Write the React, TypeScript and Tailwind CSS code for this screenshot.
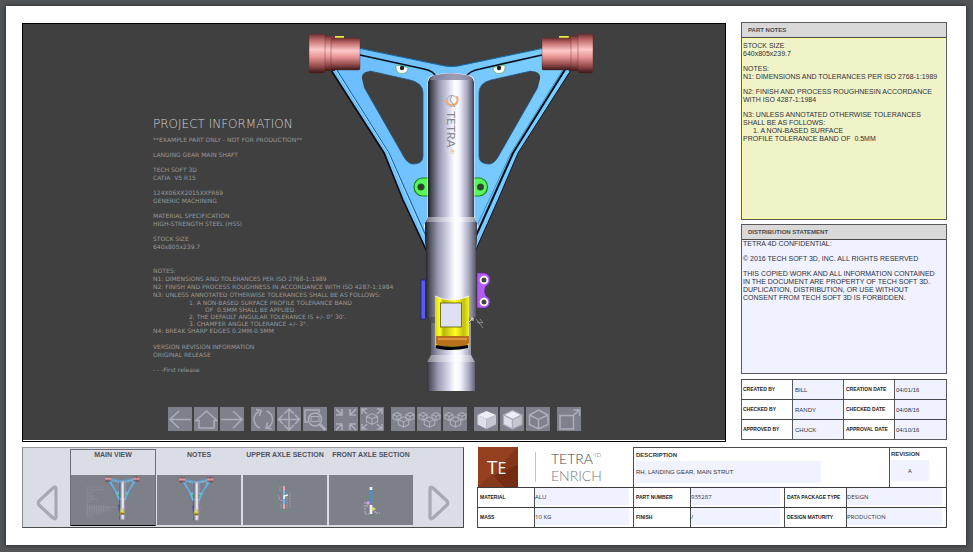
import type { ReactNode } from "react";

const FIELD =
  "min-w-0 bg-[#f0f2ff] text-[6px] text-[#33343c] outline-none leading-[8px]";

function Shaft({ marked }: { marked?: boolean }) {
  return (
    <g>
      <defs>
        <linearGradient id="tube" x1="0" x2="1" y1="0" y2="0">
          <stop offset="0" stopColor="#1c1c22" />
          <stop offset="0.08" stopColor="#4c4c5a" />
          <stop offset="0.25" stopColor="#9a9ab2" />
          <stop offset="0.45" stopColor="#d6d6ea" />
          <stop offset="0.58" stopColor="#ffffff" />
          <stop offset="0.68" stopColor="#f4f4ff" />
          <stop offset="0.85" stopColor="#a6a6be" />
          <stop offset="0.95" stopColor="#6a6a7c" />
          <stop offset="1" stopColor="#3a3a44" />
        </linearGradient>
        <linearGradient id="hub" x1="0" x2="0" y1="0" y2="1">
          <stop offset="0" stopColor="#6e3030" />
          <stop offset="0.15" stopColor="#c06a6a" />
          <stop offset="0.4" stopColor="#ffc9c9" />
          <stop offset="0.6" stopColor="#e69292" />
          <stop offset="0.85" stopColor="#8a4444" />
          <stop offset="1" stopColor="#3a1818" />
        </linearGradient>
        <linearGradient id="arm" x1="0" x2="1" y1="0" y2="0">
          <stop offset="0" stopColor="#6cbcff" />
          <stop offset="1" stopColor="#7ccfff" />
        </linearGradient>
        <linearGradient id="collar" x1="0" x2="1" y1="0" y2="0">
          <stop offset="0" stopColor="#d8d800" />
          <stop offset="0.15" stopColor="#ffff30" />
          <stop offset="0.25" stopColor="#b8b810" />
          <stop offset="0.6" stopColor="#ffff20" />
          <stop offset="0.85" stopColor="#c0c010" />
          <stop offset="1" stopColor="#f4f420" />
        </linearGradient>
      </defs>
      <path
        fillRule="evenodd"
        fill="url(#arm)"
        d="M329 66 L345 55 L359 48 L445 66 Q451 67 458 66 L543 48 L558 55 L573 66 L518 153 Q505 184 474 253 L428 253 L403 200 L385 153 Z
           M362 79 Q361 72 370 71 L410 80 Q423 83 423 93 V156 Q423 164 413 164 Q408 164 404 157 L364 87 Z
           M540 79 Q541 71 531 71 L491 80 Q479 83 479 93 V156 Q479 164 489 164 Q494 164 498 157 L538 87 Z"
      />
      <g fill="none" strokeLinejoin="round">
        <path d="M329 67 L384 153 L403 200 L428 254" stroke="#0a0d12" strokeWidth="1.6" />
        <path d="M573 67 L518 153 L498 200 L474 254" stroke="#0a1c30" strokeWidth="1" />
        <path d="M335 67 L389 153 L426 236" stroke="#0e5b9c" strokeWidth="1" />
        <path d="M333 66 L388 153 L424 236" stroke="#a8dcff" strokeWidth="0.8" />
        <path d="M566 68 L513 153 L475 238" stroke="#04101c" strokeWidth="2" />
        <path d="M564 68 L511 153 L474 232" stroke="#3d8ecb" strokeWidth="1" />
        <path d="M360 55 L424 69 Q434 71 436 77" stroke="#04101c" strokeWidth="1.7" />
        <path d="M542 55 L480 69 Q469 71 466 77" stroke="#04101c" strokeWidth="1.7" />
        <path d="M360 48.500 L445 66 Q451 67 458 66 L542 48.500" stroke="#1769a8" strokeWidth="1" />
        <path d="M364 87 L404 157 Q408 164 413 164 Q423 164 423 156 V93 Q423 83 410 80 L370 71" stroke="#25557f" strokeWidth="0.8" />
        <path d="M538 87 L498 157 Q494 164 489 164 Q479 164 479 156 V93 Q479 83 491 80 L531 71" stroke="#25557f" strokeWidth="0.8" />
        <path d="M329 66 L334 68 M573 66 L568 68" stroke="#eef" strokeWidth="1.5" />
      </g>
      <path d="M330 36 h14 v3 h-14 z M559 36 h14 v3 h-14 z" fill="#e4e840" />
      <g fill="url(#hub)" stroke="#5c2a2a" strokeWidth="0.4">
        <rect x="323" y="36" width="12" height="35" stroke="none" />
        <rect x="309" y="34" width="16" height="39" rx="1.500" />
        <rect x="331" y="38" width="29" height="32" rx="1.500" />
        <rect x="569" y="36" width="10" height="35" />
        <rect x="542" y="38" width="29" height="32" rx="1.500" />
        <rect x="578" y="34" width="15" height="39" rx="1.500" />
      </g>
      <path d="M396 65 l12 2.500 q0 6 -6 6 q-6 0 -6 -6 z M505 65 l-12 2.500 q0 6 6 6 q6 0 6 -6 z" fill="#fff" stroke="#4ab04a" strokeWidth="0.7" />
      <circle cx="402" cy="68" r="2.200" fill="#222" />
      <circle cx="499" cy="68" r="2.200" fill="#222" />

      <path d="M429 178 H422.500 a8.500 9 0 0 0 0 18 H429 z M472 178 H479 a8.500 9 0 0 1 0 18 H472 z" fill="#5cf45c" stroke="#118a11" strokeWidth="1.200" />
      <circle cx="421" cy="187" r="3.300" fill="#2f3f2f" stroke="#167516" strokeWidth="0.6" />
      <circle cx="480.500" cy="187" r="3.300" fill="#2f3f2f" stroke="#167516" strokeWidth="0.6" />

      <path d="M477 273 h7 q6 1 6 7 q0 4 -4 6 q-3 5 0 10 q4 2 4 6 q-1 6 -6 6 h-7 z" fill="#b45cf2" stroke="#5d2390" strokeWidth="0.6" />
      <circle cx="484" cy="280" r="3.400" fill="#444" stroke="#fff" strokeWidth="1.800" />
      <circle cx="484" cy="302" r="3.400" fill="#444" stroke="#fff" strokeWidth="1.800" />
      <rect x="421" y="280" width="4.500" height="39" fill="#5a5af4" stroke="#1c1c90" strokeWidth="0.8" />

      <path d="M427.500 82 Q427.500 76 434 75 Q451 71 468 75 Q474.500 76 474.500 82 V216 L478 226 L475 240 V254 H427 V240 L424 226 L427.500 216 Z" fill="#f2f2fb" />
      <path d="M428 82 Q429 76 436 75 Q451 72 466 75 Q473 76 474 82 V218 H428 Z" fill="url(#tube)" />
      <path d="M430 80 Q431 76 437 75 Q451 71.500 465 75 Q471 76 472 80 Z" fill="#8585a0" opacity="0.8" />
      <path d="M428 217 H474 L477 223 V240 L476 252 V317 L471 322 V355 L475 362 V391 H427 V362 L431 355 V322 L426 317 V252 L425 240 V223 Z" fill="url(#tube)" />
      <path d="M428 217 H474 L476 222 H426 Z M431 355 H471 L475 362 H427 Z" fill="#fff" opacity="0.350" />
      <path d="M426 317 H476 L471 323 H431 Z" fill="#30303c" opacity="0.350" />

      <path d="M435 296 Q451 304 469 296 V344 Q468 348 462 348 H441 Q435 348 435 344 Z" fill="url(#collar)" />
      <path d="M435 296 Q451 304 469 296" fill="none" stroke="#fff" strokeWidth="0.8" />
      <path d="M436 336 H469 V343 Q467 346 461 346 H442 Q437 346 436 343 Z" fill="#b8701c" />
      <path d="M438 339 H467" stroke="#e8a050" strokeWidth="1.500" />
      <path d="M436 345 Q451 348 468 345 V348 Q460 350 451 350 Q441 350 436 348 Z" fill="#08080c" />
      <rect x="440.500" y="303" width="21" height="24" fill="#dedff2" stroke="#55550a" strokeWidth="0.8" />
      <path d="M468 323 l5 -5 m-3 0 h3 v3" stroke="#ddd" strokeWidth="1" fill="none" />
      <path d="M476 319 l7 9 m-3 -9 l3 4 m-6 -1 l6 1" stroke="#999" strokeWidth="0.8" fill="none" />

      {marked && (
        <>
          <circle cx="452" cy="101" r="5.500" fill="none" stroke="#a5a5b4" strokeWidth="0.9" />
          <path d="M446 100 Q448 107 455 104 Q459 102 457 96" fill="none" stroke="#f5a862" strokeWidth="1.800" />
          <path d="M452 95 l-2 5 l5 7" fill="none" stroke="#8d8d9a" strokeWidth="0.8" />
          <text transform="translate(447 111) rotate(90)" fontFamily="Lato, sans-serif" fontSize="12" fill="#85858f">
            TETRA
          </text>
          <text transform="translate(451 149) rotate(90)" fontFamily="Lato, sans-serif" fontSize="4" fill="#f0a060">
            4D
          </text>
        </>
      )}
    </g>
  );
}

function Tool({ label, children }: { label: string; children: ReactNode }) {
  return (
    <button type="button" aria-label={label} className="size-6 bg-[#7e808b]">
      <svg viewBox="0 0 24 24" className="size-6" fill="none" stroke="#acaeb9" strokeWidth="1.5">
        {children}
      </svg>
    </button>
  );
}

function MiniCube({ x, y, r }: { x: number; y: number; r: number }) {
  const h = r / 2;
  return (
    <path
      strokeWidth="1.1"
      d={`M${x} ${y - r} L${x + r} ${y - h} V${y + h} L${x} ${y + r} L${x - r} ${y + h} V${y - h} Z M${x - r} ${y - h} L${x} ${y} L${x + r} ${y - h} M${x} ${y} V${y + r}`}
    />
  );
}

function Cubes() {
  return (
    <>
      <MiniCube x={6} y={9.5} r={4} />
      <MiniCube x={19} y={9.5} r={4} />
      <MiniCube x={12.5} y={15} r={5.2} />
    </>
  );
}

function Toolbar() {
  return (
    <div role="toolbar" aria-label="View tools" className="relative mt-auto flex justify-center gap-[7px] pb-[9px]">
      <div className="flex gap-0.5">
        <Tool label="Previous view"><path d="M23 12.500 H2 M11 4 L2 12.500 L11 21" /></Tool>
        <Tool label="Home view"><path d="M2 13.500 L12.500 4 L23 13.500 H20 V21 H5 V13.500 Z" /></Tool>
        <Tool label="Next view"><path d="M1 12.500 H22 M13 4 L22 12.500 L13 21" /></Tool>
      </div>
      <div className="flex gap-0.5">
        <Tool label="Rotate">
          <path d="M9 21 A9 9 0 0 1 8 4.500 M15.500 4 A9 9 0 0 1 16.500 20.500 M5 2.500 L10 3.500 L8.500 9 M20.500 22 L15 21 L16.500 15.500" />
        </Tool>
        <Tool label="Pan">
          <path d="M12 2 V23 M1.500 12.500 H22.500 M7 7 L12 2 L17 7 M7 18 L12 23 L17 18 M6 8 L1.500 12.500 L6 17 M18 8 L22.500 12.500 L18 17" />
        </Tool>
        <Tool label="Zoom area">
          <path d="M5 15 H2 V3 H16 V6" />
          <circle cx="12" cy="12.500" r="6.500" />
          <rect x="8" y="9.500" width="8" height="5" strokeWidth="1" />
          <path d="M17 17.500 L22.500 23" strokeWidth="2.600" />
        </Tool>
      </div>
      <div className="flex gap-0.5">
        <Tool label="Fit all">
          <path d="M2 2 L7 7 M2 8 H8 V2 M22 2 L17 7 M22 8 H16 V2 M2 23 L7 18 M2 17 H8 V23 M22 23 L17 18 M22 17 H16 V23" strokeWidth="1.600" />
        </Tool>
        <Tool label="Fit selection">
          <path d="M2 2 L7 7 M2 7 V2 H7 M22 2 L17 7 M22 7 V2 H17 M2 22 L7 17 M2 17 V22 H7 M22 22 L17 17 M22 17 V22 H17" />
          <MiniCube x={12} y={12} r={5.5} />
        </Tool>
      </div>
      <div className="flex gap-0.5">
        <Tool label="Isolate part"><Cubes /></Tool>
        <Tool label="Hide part"><Cubes /></Tool>
        <Tool label="Show all parts"><Cubes /></Tool>
      </div>
      <div className="flex gap-0.5">
        <Tool label="Solid">
          <g stroke="none">
            <path d="M12.500 4 L22 8 L12.500 12 L3.500 8 Z" fill="#eceef6" />
            <path d="M3.500 8 L12.500 12 V22 L3.500 17.500 Z" fill="#dcdee8" />
            <path d="M22 8 L12.500 12 V22 L22 17.500 Z" fill="#c4c6d2" />
          </g>
        </Tool>
        <Tool label="Solid with outline">
          <g strokeWidth="1.2" stroke="#a9abb5" strokeLinejoin="round">
            <path d="M12.500 3.500 L22 8 L12.500 12.500 L3.500 8 Z" fill="#eceef6" />
            <path d="M3.500 8 L12.500 12.500 V22 L3.500 17.500 Z" fill="#dcdee8" />
            <path d="M22 8 L12.500 12.500 V22 L22 17.500 Z" fill="#c4c6d2" />
          </g>
        </Tool>
        <Tool label="Wireframe">
          <path d="M12.500 3 L22 8 V17.500 L12.500 22 L3.500 17.500 V8 Z M3.500 8 L12.500 12.500 L22 8 M12.500 12.500 V22" />
        </Tool>
      </div>
      <Tool label="Full screen">
        <path d="M3 8.500 H16.500 V22 H3 Z M16.500 8.500 L22 3 M16.500 3 H22.500 V9" />
      </Tool>
    </div>
  );
}

function Viewer() {
  return (
    <section
      aria-label="3D view"
      className="relative mt-px flex min-w-0 flex-1 flex-col border border-black bg-[#404040]"
    >
      <svg viewBox="23 24 702 417" className="absolute inset-0 size-full" role="img" aria-label="Landing gear main strut">
        <Shaft marked />
      </svg>
      <div className="relative pt-[94px] pl-[130px] font-['DejaVu_Sans',sans-serif] text-[6px] leading-[8px] text-[#989898]">
        <h1 className="text-[12px] leading-[12px] font-extralight text-[#d0d0d0]">PROJECT INFORMATION</h1>
        <div className="space-y-[7px] pt-[6px] whitespace-pre">
          <p>**EXAMPLE PART ONLY - NOT FOR PRODUCTION**</p>
          <p>LANDING GEAR MAIN SHAFT</p>
          <p>TECH SOFT 3D<br />CATIA  V5 R15</p>
          <p>124X06XX2015XXFR69<br />GENERIC MACHINING</p>
          <p>MATERIAL SPECIFICATION<br />HIGH-STRENGTH STEEL (HSS)</p>
          <p>STOCK SIZE<br />640x805x239.7</p>
        </div>
        <div className="pt-4 whitespace-pre">
          <p>NOTES:</p>
          <p>N1: DIMENSIONS AND TOLERANCES PER ISO 2768-1:1989</p>
          <p>N2: FINISH AND PROCESS ROUGHNESS IN ACCORDANCE WITH ISO 4287-1:1984</p>
          <p>N3: UNLESS ANNOTATED OTHERWISE TOLERANCES SHALL BE AS FOLLOWS:</p>
          <div className="pl-9 leading-[7px]">
            <p>1. A NON-BASED SURFACE PROFILE TOLERANCE BAND</p>
            <p className="pl-4">OF  0.5MM SHALL BE APPLIED.</p>
            <p>2. THE DEFAULT ANGULAR TOLERANCE IS +/- 0° 30'.</p>
            <p>3. CHAMFER ANGLE TOLERANCE +/- 3°.</p>
          </div>
          <p>N4: BREAK SHARP EDGES 0.2MM-0.5MM</p>
        </div>
        <div className="space-y-[7px] pt-2">
          <p>VERSION REVISION INFORMATION<br />ORIGINAL RELEASE</p>
          <p>- - -First release</p>
        </div>
      </div>
      <Toolbar />
      <div className="h-px bg-white" />
    </section>
  );
}

function Panel({ title, body, children }: { title: string; body: string; children: ReactNode }) {
  return (
    <section className="border border-[#5a5a5e] text-[#2e303a]">
      <h2 className="h-[15px] border-b border-[#4a4a4a] bg-[#d9d9d9] pl-[6px] text-[6px] leading-[14px] font-bold text-[#484a52]">
        {title}
      </h2>
      <div className={`space-y-[7px] text-[7px] leading-[8px] ${body}`}>{children}</div>
    </section>
  );
}

const approvals = [
  ["CREATED BY", "BILL", "CREATION DATE", "04/01/16"],
  ["CHECKED BY", "RANDY", "CHECKED DATE", "04/08/16"],
  ["APPROVED BY", "CHUCK", "APPROVAL DATE", "04/10/16"],
];

function Approvals() {
  return (
    <form className="mt-[5px] border-r border-b border-[#5a5a5e]">
      {approvals.map(([who, name, when, date]) => (
        <div key={who} className="grid h-5 grid-cols-[51px_51px_51px_1fr] border-t border-[#4a4a4e]">
          <label htmlFor={who} className="border-l border-[#5a5a5e] pl-px text-[5px] leading-[19px] font-bold text-[#222]">
            {who}
          </label>
          <input id={who} defaultValue={name} className={`${FIELD} border-l border-[#5a5a5e] pl-0.5`} />
          <label htmlFor={when} className="border-l border-[#5a5a5e] pl-0.5 text-[5px] leading-[19px] font-bold text-[#222]">
            {when}
          </label>
          <input id={when} defaultValue={date} className={`${FIELD} border-l border-[#5a5a5e] pl-px`} />
        </div>
      ))}
    </form>
  );
}

function Sidebar() {
  return (
    <aside className="flex w-[206px] shrink-0 flex-col">
      <Panel title="PART NOTES" body="h-[181px] border border-[#ffff99] bg-[#f0f3c8] pt-[3px]">
        <p>STOCK SIZE<br />640x805x239.7</p>
        <p>NOTES:<br />N1: DIMENSIONS AND TOLERANCES PER ISO 2768-1:1989</p>
        <p>N2: FINISH AND PROCESS ROUGHNESIN ACCORDANCE WITH ISO 4287-1:1984</p>
        <p>
          N3: UNLESS ANNOTATED OTHERWISE TOLERANCES
          <br />
          SHALL BE AS FOLLOWS:
          <span className="block pl-[10px]">1. A NON-BASED SURFACE</span>
          <span className="block whitespace-pre">PROFILE TOLERANCE BAND OF  0.5MM</span>
        </p>
      </Panel>
      <div className="h-1" />
      <Panel title="DISTRIBUTION STATEMENT" body="h-[133px] bg-[#f0f2ff] px-px">
        <p>TETRA 4D CONFIDENTIAL:</p>
        <p>© 2016 TECH SOFT 3D, INC. ALL RIGHTS RESERVED</p>
        <p>
          THIS COPIED WORK AND ALL INFORMATION CONTAINED
          <br />
          IN THE DOCUMENT ARE PROPERTY OF TECH SOFT 3D.
          <br />
          DUPLICATION, DISTRIBUTION, OR USE WITHOUT
          <br />
          CONSENT FROM TECH SOFT 3D IS FORBIDDEN.
        </p>
      </Panel>
      <Approvals />
    </aside>
  );
}

function ThumbText() {
  const rows = [120, 140, 155, 171, 178, 194, 202, 217, 224, 240, 247, 271, 278, 286, 293, 301, 309, 316, 324, 332, 347, 355, 370];
  const widths = [145, 160, 88, 46, 49, 68, 65, 84, 95, 38, 49, 22, 188, 256, 236, 210, 150, 218, 168, 126, 107, 61, 61];
  return (
    <g stroke="#b4b6be" strokeWidth="3" strokeDasharray="14 5" opacity="0.6">
      {rows.map((y, i) => (
        <path key={y} d={`M153 ${y} h${widths[i]}`} />
      ))}
    </g>
  );
}

function Slot({ title, active, children }: { title: string; active?: boolean; children: ReactNode }) {
  return (
    <button
      type="button"
      aria-pressed={!!active}
      className={`flex w-[86px] flex-col border ${active ? "border-[#6c6e78] border-b-black" : "border-transparent border-r-[#dcdccf]"}`}
    >
      <span className="h-[25px] w-full text-center text-[7px] leading-[10px] font-bold whitespace-nowrap text-[#50525c]">
        {title}
      </span>
      <span className="block h-[50px] w-full bg-[#7e8089]">{children}</span>
    </button>
  );
}

function Arrow({ next }: { next?: boolean }) {
  return (
    <button
      type="button"
      aria-label={next ? "Next view" : "Previous view"}
      className={`flex items-end justify-center pb-[6px] ${next ? "flex-1" : "w-[47px]"}`}
    >
      <svg viewBox="0 0 22 36" className="h-9 w-[22px]" fill="none" stroke="#a6a8b2" strokeWidth="3.2" strokeLinejoin="round">
        {next ? (
          <path d="M2 4 Q2 1 5 3 L19 16 Q20.500 18 19 20 L5 33 Q2 35 2 32 Z" />
        ) : (
          <path d="M20 4 Q20 1 17 3 L3 16 Q1.500 18 3 20 L17 33 Q20 35 20 32 Z" />
        )}
      </svg>
    </button>
  );
}

function Carousel() {
  return (
    <nav
      aria-label="Saved views"
      className="flex w-[442px] shrink-0 border border-[#4a4a4a] border-t-[#9a9a9a] border-l-[#8a8a8a] bg-[#dadce6]"
    >
      <Arrow />
      <div className="flex pt-px pb-px">
        <Slot title="MAIN VIEW" active>
          <svg viewBox="23 24 702 410" className="size-full">
            <ThumbText />
            <g opacity="0.9"><Shaft /></g>
          </svg>
        </Slot>
        <Slot title="NOTES">
          <svg viewBox="123 18 702 410" className="size-full">
            <g opacity="0.9"><Shaft /></g>
          </svg>
        </Slot>
        <Slot title="UPPER AXLE SECTION">
          <svg viewBox="0 0 84 50" className="size-full" fill="none">
            <rect x="31.500" y="8.500" width="19" height="28" stroke="#6e8c7c" strokeWidth="0.8" />
            <path d="M41 11 v5 M41 29 v5" stroke="#e0a8a8" strokeWidth="2" />
            <path d="M41 16 v13" stroke="#6cb8ee" strokeWidth="2.200" />
            <path d="M41 24 v-3 l4 -1" stroke="#f0f4fa" strokeWidth="1.500" />
            <path d="M35 20 l2 5 l3 1" stroke="#b48ad0" strokeWidth="1" />
            <path d="M44 22 v11 M47 18 v15 M37 12 v4 M38 29 v5" stroke="#b8bac2" strokeWidth="0.6" strokeDasharray="1.500 1" />
          </svg>
        </Slot>
        <Slot title="FRONT AXLE SECTION">
          <svg viewBox="0 0 84 50" className="size-full" fill="none">
            <rect x="32.500" y="21.500" width="20" height="20" stroke="#6e8c7c" strokeWidth="0.8" />
            <path d="M42 14 v14" stroke="#4a90cc" strokeWidth="2.400" />
            <path d="M42 12 v3 M42 30 v9" stroke="#f0f2fa" strokeWidth="2.600" />
            <circle cx="39" cy="28" r="1.800" fill="#d89af0" />
            <circle cx="44" cy="34" r="1.800" fill="#f0e060" />
            <path d="M36 27 v12 h4 M46 33 v5 h5 M37 31 h4" stroke="#c4c6cc" strokeWidth="0.8" strokeDasharray="2 1" />
          </svg>
        </Slot>
      </div>
      <Arrow next />
    </nav>
  );
}

const rows = [
  ["MATERIAL", "ALU", "PART NUMBER", "935287", "DATA PACKAGE TYPE", "DESIGN"],
  ["MASS", "10 KG", "FINISH", "/", "DESIGN MATURITY", "PRODUCTION"],
];

function TitleBlock() {
  return (
    <form className="flex min-w-0 flex-1 flex-col">
      <div className="flex h-10">
        <div className="flex w-[156px] shrink-0 items-center pl-px">
          <svg viewBox="0 0 40 40" className="size-10" role="img" aria-label="Tetra Enrich">
            <path d="M0 0 H40 V40 H0 Z" fill="#94401f" />
            <path d="M40 0 L20 20 L40 40 Z" fill="#853617" />
            <path d="M0 40 L20 26 L40 18 V40 Z" fill="#742d12" />
            <path d="M0 40 L14 27 L26 40 Z" fill="#873a1b" />
            <text x="9" y="27" fontFamily="Open Sans, sans-serif" fontSize="19" fill="#fff">
              T<tspan fontSize="16">E</tspan>
            </text>
          </svg>
          <div className="ml-[17px] h-[30px] w-px bg-[#c4c4c4]" />
          <div className="pl-[15px] font-['Lato',sans-serif] text-[14px] leading-[17px] font-light text-[#44454a]">
            <div className="flex">
              TETRA<span className="text-[6px] leading-[10px]">4D</span>
            </div>
            <div className="text-[#77787d]">ENRICH</div>
          </div>
        </div>
        <div className="min-w-0 flex-1 border-t border-l border-[#4a4a4e] pl-0.5">
          <label htmlFor="description" className="block h-[13px] text-[6px] leading-[14px] font-bold text-[#333]">
            DESCRIPTION
          </label>
          <input
            id="description"
            defaultValue="RH, LANDING GEAR, MAIN STRUT"
            className={`${FIELD} block h-[22px] w-[185px]`}
          />
        </div>
        <div className="w-[58px] shrink-0 border-x border-t border-[#4a4a4e] pl-px">
          <label htmlFor="revision" className="block h-3 text-[6px] leading-[12px] font-bold text-[#333]">
            REVISION
          </label>
          <input
            id="revision"
            defaultValue="A"
            className={`${FIELD} block h-[21px] w-[38px] text-center font-['Open_Sans',sans-serif]`}
          />
        </div>
      </div>
      <div className="border-r border-b border-[#3c3c40]">
        {rows.map((cells) => (
          <div key={cells[0]} className="grid h-5 grid-cols-[57px_99px_57px_94px_62px_1fr] border-t border-[#3c3c40]">
            {cells.map((text, i) =>
              i % 2 === 0 ? (
                <label
                  key={text}
                  htmlFor={text}
                  className="border-l border-[#4a4a4e] pl-0.5 text-[5px] leading-[19px] font-bold whitespace-nowrap text-[#222]"
                >
                  {text}
                </label>
              ) : (
                <div key={text} className="flex min-w-0 border-l border-[#4a4a4e] pb-0.5 pr-1">
                  <input
                    id={cells[i - 1]}
                    defaultValue={text}
                    className={`${FIELD} w-full font-['Open_Sans',sans-serif]`}
                  />
                </div>
              ),
            )}
          </div>
        ))}
      </div>
    </form>
  );
}

export default function App() {
  return (
    <div className="min-h-screen bg-[#525659] pt-[6px] pr-[7px] pb-[7px] pl-[6px] font-['Liberation_Sans',Arial,sans-serif]">
      <main className="flex flex-col gap-[5px] bg-white pt-4 pr-[19px] pb-[17px] pl-4 shadow-[0_0_5px_rgba(0,0,0,0.6)]">
        <div className="flex min-h-[420px] gap-[15px]">
          <Viewer />
          <Sidebar />
        </div>
        <div className="flex gap-[13px]">
          <Carousel />
          <TitleBlock />
        </div>
      </main>
    </div>
  );
}
